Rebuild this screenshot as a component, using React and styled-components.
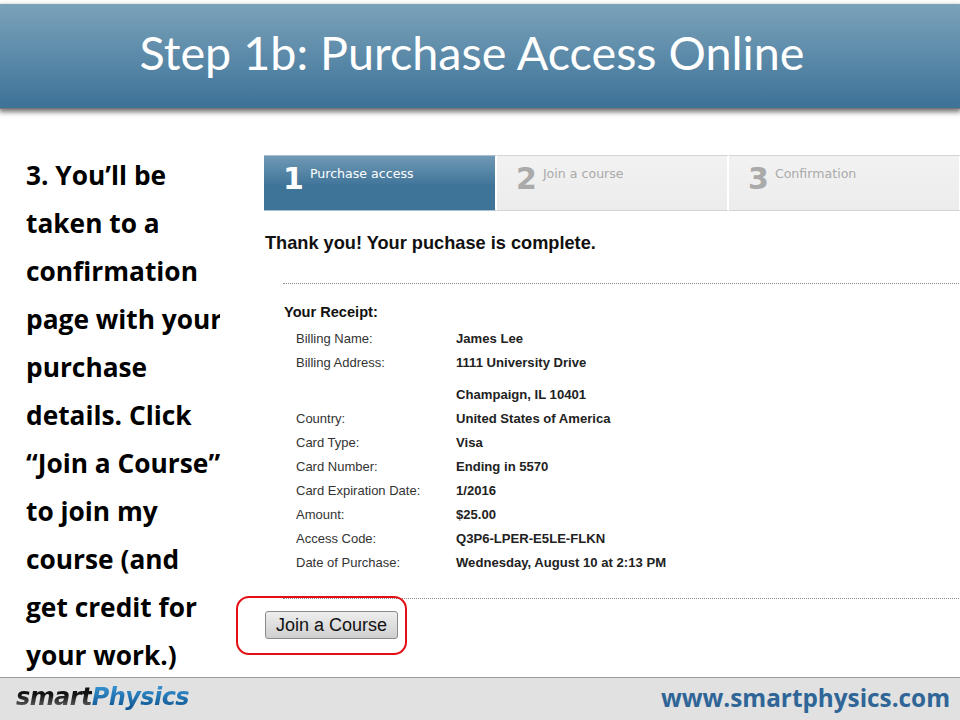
import { Fragment } from 'react';
import styled, { createGlobalStyle } from 'styled-components';

const GlobalStyle = createGlobalStyle`
  html, body {
    margin: 0;
    padding: 0;
    background: #fff;
  }
`;

const Slide = styled.div`
  width: 960px;
  height: 720px;
  display: flex;
  flex-direction: column;
  overflow: hidden;
  background: #fff;
`;

const Header = styled.header`
  height: 104px;
  margin-top: 4px;
  padding-right: 16px;
  flex: none;
  display: flex;
  align-items: center;
  justify-content: center;
  background: linear-gradient(#7ba2ba, #3f7499 96%);
  box-shadow: 0 1px 0 #777, 0 3px 5px 1px rgba(0, 0, 0, 0.55);
`;

const Title = styled.h1`
  margin: 0 0 9px;
  font: 400 46.7px 'Lato', sans-serif;
  color: #fff;
`;

const Main = styled.main`
  flex: 1;
  display: flex;
  min-height: 0;
  padding-top: 47px;
`;

const Steps = styled.ol`
  margin: 0;
  padding: 0;
  list-style: none;
  display: flex;
  height: 56px;
`;

const Step = styled.li`
  width: ${(p) => p.$width}px;
  display: flex;
  box-sizing: border-box;
  padding: 6px 0 0 19px;
  gap: 6px;
  font-family: 'DejaVu Sans', sans-serif;
  color: ${(p) => (p.$active ? '#fff' : '#aaa')};
  background: ${(p) =>
    p.$active ? 'linear-gradient(#7099b5, #3f7499 55%)' : 'linear-gradient(#f2f2f2, #ececec)'};
  border-top: 1px solid ${(p) => (p.$active ? '#a9bfce' : '#d4d4d4')};
  border-bottom: 1px solid ${(p) => (p.$active ? '#a9bfce' : '#d4d4d4')};
  border-right: 2px solid #fff;
`;

const StepNumber = styled.span`
  font-size: 30px;
  font-weight: 700;
  line-height: 34px;
`;

const StepLabel = styled.span`
  margin-top: 2px;
  font-size: 12.6px;
  line-height: 20px;
`;

const Instructions = styled.div`
  width: 220px;
  flex: none;
  box-sizing: border-box;
  padding-left: 26px;
  overflow: hidden;
  white-space: nowrap;
  font: 700 26.3px/48px 'Open Sans', sans-serif;
  color: #000;
  margin-top: -4px;
`;

const Screenshot = styled.section`
  position: relative;
  flex: 1;
  margin-left: 44px;
  font-family: 'Liberation Sans', Arial, sans-serif;
  color: #111;
`;

const Thanks = styled.h2`
  margin: 22px 0 0 1px;
  font-size: 18.2px;
  line-height: 20px;
  font-weight: 700;
  color: #111;
`;

const Rule = styled.hr`
  margin: ${(p) => p.$top}px 0 0 19px;
  border: 0;
  border-top: 1px dotted #888;
`;

const Receipt = styled.div`
  padding: 19px 0 0 20px;
`;

const ReceiptTitle = styled.h3`
  margin: 0;
  font-size: 14.6px;
  line-height: 18px;
  font-weight: 700;
`;

const Rows = styled.dl`
  margin: 6px 0 0 12px;
  display: grid;
  grid-template-columns: 160px 1fr;
  font-size: 13.1px;
  line-height: 24px;
`;

const Label = styled.dt`
  grid-column: 1;
  color: #333;
  font-size: 13px;
`;

const Value = styled.dd`
  grid-column: 2;
  margin: ${(p) => (p.$spaced ? '8px 0 0' : '0')};
  font-weight: 700;
  color: #222;
`;

const JoinButton = styled.button`
  display: block;
  margin-top: 12px;
  width: 133px;
  height: 28px;
  margin-left: 1px;
  padding: 0;
  font: 400 18px 'Liberation Sans', Arial, sans-serif;
  color: #111;
  background: linear-gradient(#eeeeee, #cfcfcf);
  border: 1px solid #8a8a8a;
  border-radius: 3px;
`;

const Callout = styled.div`
  position: absolute;
  left: -28px;
  top: 441px;
  width: 171px;
  height: 59px;
  box-sizing: border-box;
  border: 2.5px solid #e30d13;
  border-radius: 13px;
`;

const Footer = styled.footer`
  height: 43px;
  flex: none;
  display: flex;
  align-items: center;
  justify-content: space-between;
  box-sizing: border-box;
  padding: 0 10px 0 16px;
  background: #e1e1e1;
  border-top: 1px solid #9c9c9c;
`;

const Logo = styled.div`
  margin: -4px 0 0;
  font: italic 700 24px 'DejaVu Sans', sans-serif;
  letter-spacing: -0.6px;
`;

const LogoDark = styled.span`
  background: linear-gradient(#111 40%, #777);
  -webkit-background-clip: text;
  background-clip: text;
  color: transparent;
`;

const LogoBlue = styled.span`
  background: linear-gradient(#3c9ad8, #0b4f8c);
  -webkit-background-clip: text;
  background-clip: text;
  color: transparent;
`;

const Site = styled.div`
  margin-top: -3px;
  font: 700 24.3px 'Open Sans', sans-serif;
  color: #2f6597;
`;

const receipt = [
  ['Billing Name:', 'James Lee'],
  ['Billing Address:', '1111 University Drive'],
  ['', 'Champaign, IL 10401', true],
  ['Country:', 'United States of America'],
  ['Card Type:', 'Visa'],
  ['Card Number:', 'Ending in 5570'],
  ['Card Expiration Date:', '1/2016'],
  ['Amount:', '$25.00'],
  ['Access Code:', 'Q3P6-LPER-E5LE-FLKN'],
  ['Date of Purchase:', 'Wednesday, August 10 at 2:13 PM'],
];

const lines = [
  '3. You’ll be',
  'taken to a',
  'confirmation',
  'page with your',
  'purchase',
  'details. Click',
  '“Join a Course”',
  'to join my',
  'course (and',
  'get credit for',
  'your work.)',
];

const App = () => (
  <Slide>
    <GlobalStyle />
    <Header>
      <Title>Step 1b: Purchase Access Online</Title>
    </Header>
    <Main>
      <Instructions>
        {lines.map((line) => (
          <div key={line}>{line}</div>
        ))}
      </Instructions>
      <Screenshot>
        <Steps>
          <Step $active $width={233}>
            <StepNumber>1</StepNumber>
            <StepLabel>Purchase access</StepLabel>
          </Step>
          <Step $width={232}>
            <StepNumber>2</StepNumber>
            <StepLabel>Join a course</StepLabel>
          </Step>
          <Step $width={232}>
            <StepNumber>3</StepNumber>
            <StepLabel>Confirmation</StepLabel>
          </Step>
        </Steps>
        <Thanks>Thank you! Your puchase is complete.</Thanks>
        <Rule $top={30} />
        <Receipt>
          <ReceiptTitle>Your Receipt:</ReceiptTitle>
          <Rows>
            {receipt.map(([label, value, spaced]) => (
              <Fragment key={value}>
                <Label>{label}</Label>
                <Value $spaced={spaced}>{value}</Value>
              </Fragment>
            ))}
          </Rows>
        </Receipt>
        <Rule $top={23} />
        <JoinButton>Join a Course</JoinButton>
        <Callout />
      </Screenshot>
    </Main>
    <Footer>
      <Logo>
        <LogoDark>smart</LogoDark>
        <LogoBlue>Physics</LogoBlue>
      </Logo>
      <Site>www.smartphysics.com</Site>
    </Footer>
  </Slide>
);

export default App;
